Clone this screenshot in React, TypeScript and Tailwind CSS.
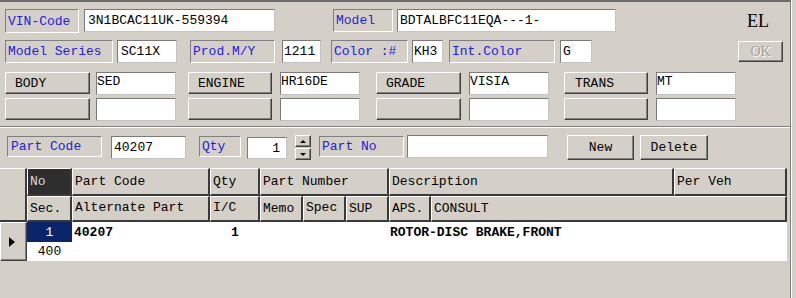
import React from "react";

const raised =
  "border border-t-white border-l-white border-r-[#404040] border-b-[#404040] shadow-[inset_-1px_-1px_0_#808080]";
const sunken =
  "border border-t-[#808080] border-l-[#808080] border-r-white border-b-white";
const field =
  "border border-t-[#7a7a7a] border-l-[#7a7a7a] border-r-[#c4c4c4] border-b-[#c4c4c4] bg-white";

function Label({ text, className }: { text: string; className: string }) {
  return (
    <div className={`flex items-center pl-[2px] text-[#2020e0] ${sunken} ${className}`}>
      {text}
    </div>
  );
}

function Field({ value = "", className }: { value?: string; className: string }) {
  return <div className={`flex items-center whitespace-pre ${field} ${className}`}>{value}</div>;
}

function Btn({ text, className }: { text: string; className: string }) {
  return <div className={`flex items-center bg-[#d4d0c8] ${raised} ${className}`}>{text}</div>;
}

function Head({
  text,
  w,
  top,
  dark,
}: {
  text: string;
  w: string;
  top?: boolean;
  dark?: boolean;
}) {
  return (
    <div
      className={`${w} h-full flex ${top ? "items-start pt-[4px]" : "items-center"} pl-[2px] border-t border-l border-t-white border-l-white border-r-2 border-b-2 border-r-[#3a3a3a] border-b-[#3a3a3a] ${
        dark ? "bg-[#2e2e2e] text-[#d8d8d8]" : "bg-[#d4d0c8] text-black"
      }`}
    >
      {text}
    </div>
  );
}

export default function App() {
  return (
    <div
      className="w-[796px] h-[298px] overflow-hidden flex bg-[#d4d0c8] text-[13px] leading-none text-black"
      style={{ fontFamily: '"Liberation Mono", "Courier New", monospace' }}
    >
      <div className="w-[791px] h-full border-t-2 border-t-[#6b6b6b] border-r border-r-[#808080] flex flex-col">
        {/* row 1 */}
        <div className="flex items-start mt-[7px] h-[24px]">
          <Label text="VIN-Code" className="ml-[5px] w-[74px] h-[24px]" />
          <Field value="3N1BCAC11UK-559394" className="ml-[5px] w-[191px] h-[23px] pl-[3px]" />
          <Label text="Model" className="ml-[58px] w-[60px] h-[23px]" />
          <Field value="BDTALBFC11EQA---1-" className="ml-[4px] w-[219px] h-[23px] pl-[2px]" />
          <div
            className="ml-[131px] mt-[3px] text-[18px]"
            style={{ fontFamily: '"Liberation Serif", "Times New Roman", serif' }}
          >
            EL
          </div>
        </div>

        {/* row 2 */}
        <div className="flex items-start mt-[7px] h-[23px]">
          <Label text="Model Series" className="ml-[5px] w-[108px] h-[23px]" />
          <Field value="SC11X" className="ml-[4px] w-[60px] h-[23px] pl-[3px]" />
          <Label text="Prod.M/Y" className="ml-[13px] w-[85px] h-[23px]" />
          <Field value="1211" className="ml-[7px] w-[39px] h-[23px] pl-[1px]" />
          <Label text="Color :#" className="ml-[10px] w-[77px] h-[23px]" />
          <Field value="KH3" className="ml-[4px] w-[31px] h-[23px] pl-[1px]" />
          <Label text="Int.Color" className="ml-[6px] w-[106px] h-[23px]" />
          <Field value="G" className="ml-[5px] w-[32px] h-[23px] pl-[2px]" />
          <div
            className={`ml-[146px] mt-[1px] w-[45px] h-[21px] flex items-center justify-center text-[14px] text-[#a0a0a0] [text-shadow:1px_1px_0_#fff] bg-[#d4d0c8] ${raised}`}
            style={{ fontFamily: '"Liberation Serif", "Times New Roman", serif' }}
          >
            OK
          </div>
        </div>

        {/* row 3 */}
        <div className="flex items-start mt-[9px] h-[23px]">
          <Btn text="BODY" className="ml-[5px] w-[85px] h-[22px] pl-[9px]" />
          <Field value="SED" className="ml-[6px] w-[80px] h-[23px] !items-start pt-[2px]" />
          <Btn text="ENGINE" className="ml-[12px] w-[84px] h-[22px] pl-[9px]" />
          <Field value="HR16DE" className="ml-[8px] w-[80px] h-[23px] !items-start pt-[2px]" />
          <Btn text="GRADE" className="ml-[16px] w-[85px] h-[22px] pl-[9px]" />
          <Field value="VISIA" className="ml-[8px] w-[80px] h-[23px] !items-start pt-[2px]" />
          <Btn text="TRANS" className="ml-[15px] w-[84px] h-[22px] pl-[10px]" />
          <Field value="MT" className="ml-[8px] w-[80px] h-[23px] !items-start pt-[2px]" />
        </div>
        <div className="flex items-start mt-[3px] h-[23px]">
          <Btn text="" className="ml-[5px] w-[85px] h-[22px]" />
          <Field className="ml-[6px] w-[80px] h-[23px]" />
          <Btn text="" className="ml-[12px] w-[84px] h-[22px]" />
          <Field className="ml-[8px] w-[80px] h-[23px]" />
          <Btn text="" className="ml-[16px] w-[85px] h-[22px]" />
          <Field className="ml-[8px] w-[80px] h-[23px]" />
          <Btn text="" className="ml-[15px] w-[84px] h-[22px]" />
          <Field className="ml-[8px] w-[80px] h-[23px]" />
        </div>

        {/* separator */}
        <div className="mt-[5px] h-px bg-[#808080]" />
        <div className="h-px bg-white" />

        {/* row 4 */}
        <div className="flex items-start mt-[7px] h-[25px]">
          <Label text="Part Code" className="ml-[7px] mt-[1px] w-[95px] h-[21px] pl-[3px]" />
          <Field value="40207" className="ml-[9px] mt-[1px] w-[75px] h-[23px] pl-[2px]" />
          <Label text="Qty" className="ml-[13px] mt-[1px] w-[42px] h-[21px]" />
          <Field value="1" className="ml-[6px] mt-[2px] w-[40px] h-[22px] justify-end pr-[6px]" />
          <div className="ml-[8px] w-[16px] h-[25px] flex flex-col gap-px">
            <div className={`flex-1 flex items-center justify-center bg-[#d4d0c8] ${raised}`}>
              <div className="w-0 h-0 border-l-[3px] border-r-[3px] border-b-[3px] border-l-transparent border-r-transparent border-b-black" />
            </div>
            <div className={`flex-1 flex items-center justify-center bg-[#d4d0c8] ${raised}`}>
              <div className="w-0 h-0 border-l-[3px] border-r-[3px] border-t-[3px] border-l-transparent border-r-transparent border-t-black" />
            </div>
          </div>
          <Label text="Part No" className="ml-[8px] mt-[1px] w-[85px] h-[21px]" />
          <Field className="ml-[3px] w-[141px] h-[23px]" />
          <Btn text="New" className="ml-[19px] w-[67px] h-[25px] justify-center" />
          <Btn text="Delete" className="ml-[6px] w-[68px] h-[25px] justify-center" />
        </div>

        {/* grid */}
        <div className="flex mt-[8px]">
          <div className="w-[27px] flex flex-col">
            <div className="h-[54px] bg-[#d4d0c8] border-t border-t-white border-r-2 border-r-[#3a3a3a] border-b-2 border-b-[#3a3a3a]" />
            <div className={`h-[39px] flex items-center justify-center bg-[#d4d0c8] ${raised}`}>
              <div className="ml-[-3px] w-0 h-0 border-t-[5px] border-b-[5px] border-l-[6px] border-t-transparent border-b-transparent border-l-black" />
            </div>
          </div>
          <div className="w-[760px] flex flex-col">
            <div className="flex h-[28px]">
              <Head text="No" w="w-[45px]" dark />
              <Head text="Part Code" w="w-[138px]" />
              <Head text="Qty" w="w-[50px]" />
              <Head text="Part Number" w="w-[129px]" />
              <Head text="Description" w="w-[285px]" />
              <Head text="Per Veh" w="w-[113px]" />
            </div>
            <div className="flex h-[26px]">
              <Head text="Sec." w="w-[45px]" />
              <Head text="Alternate Part" w="w-[138px]" top />
              <Head text="I/C" w="w-[50px]" top />
              <Head text="Memo" w="w-[43px]" />
              <Head text="Spec" w="w-[43px]" top />
              <Head text="SUP" w="w-[43px]" />
              <Head text="APS." w="w-[42px]" />
              <Head text="CONSULT" w="w-[356px]" />
            </div>
            <div className="h-[39px] bg-white flex flex-col">
              <div className="flex h-[20px] items-center font-bold">
                <div className="w-[45px] h-full flex items-center justify-center bg-[#0a246a] text-white font-normal">
                  1
                </div>
                <div className="w-[138px] pl-[2px]">40207</div>
                <div className="w-[50px] text-center">1</div>
                <div className="w-[129px]" />
                <div className="pl-[1px]">ROTOR-DISC BRAKE,FRONT</div>
              </div>
              <div className="flex h-[19px] items-center">
                <div className="w-[45px] text-center">400</div>
              </div>
            </div>
          </div>
        </div>
      </div>
      <div className="w-px h-full bg-white" />
    </div>
  );
}
